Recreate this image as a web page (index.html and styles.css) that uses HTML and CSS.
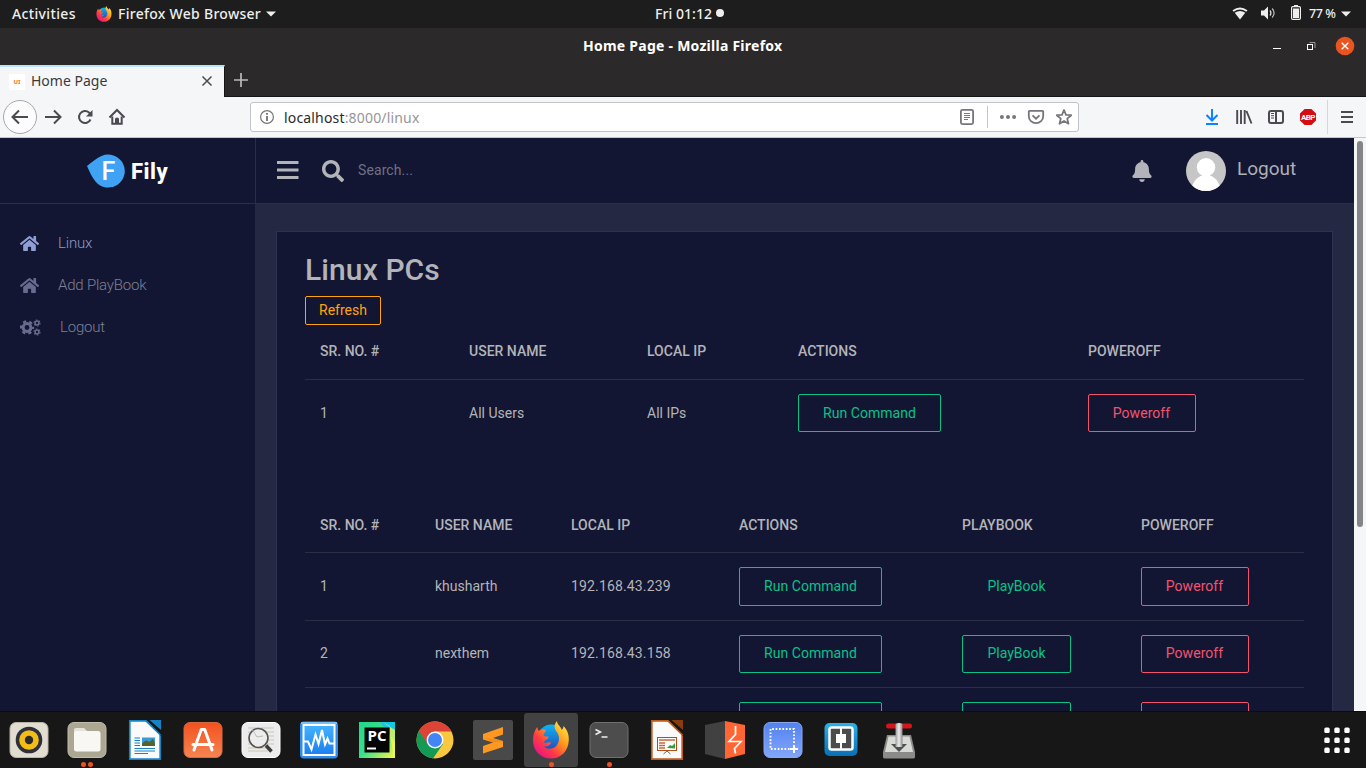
FILE: index.html
```html
<!DOCTYPE html>
<html lang="en">
<head>
<meta charset="utf-8">
<title>Home Page</title>
<link rel="stylesheet" href="styles.css">
</head>
<body>
<svg class="defs" width="0" height="0">
  <defs>
    <linearGradient id="ffx" x1="0.9" y1="0" x2="0.1" y2="0.9"><stop offset="0" stop-color="#fff14a"/><stop offset=".4" stop-color="#ff9a1c"/><stop offset=".7" stop-color="#ff3a45"/><stop offset="1" stop-color="#e6138a"/></linearGradient>
    <linearGradient id="globe" x1="0" y1="0" x2="0" y2="1"><stop offset="0" stop-color="#0bb5f5"/><stop offset="1" stop-color="#2a3fae"/></linearGradient>
    <linearGradient id="vital" x1="0" y1="0" x2="0" y2="1"><stop offset="0" stop-color="#43b4ff"/><stop offset="1" stop-color="#1b7ff0"/></linearGradient>
    <linearGradient id="soft" x1="0" y1="0" x2="0" y2="1"><stop offset="0" stop-color="#f4511e"/><stop offset="1" stop-color="#f58552"/></linearGradient>
    <linearGradient id="shot" x1="0" y1="0" x2="0" y2="1"><stop offset="0" stop-color="#5182f0"/><stop offset="1" stop-color="#84a6fb"/></linearGradient>
    <linearGradient id="brk" x1="0" y1="0" x2="0" y2="1"><stop offset="0" stop-color="#2bb1e8"/><stop offset="1" stop-color="#0a6fb5"/></linearGradient>
    <linearGradient id="pcg" x1="0" y1="0" x2="1" y2="1"><stop offset="0" stop-color="#21d789"/><stop offset=".5" stop-color="#3be08a"/><stop offset="1" stop-color="#fcf84a"/></linearGradient>
    <linearGradient id="metal" x1="0" y1="0" x2="1" y2="0"><stop offset="0" stop-color="#999"/><stop offset=".5" stop-color="#eee"/><stop offset="1" stop-color="#888"/></linearGradient>
    <symbol id="firefox" viewBox="0 0 36 38">
      <circle cx="18.500" cy="18" r="14.500" fill="url(#globe)"/>
      <path d="M24 0c0 4 4 5 4.500 9 1.500-1 2-2.500 2-4 4 4 5.500 9 5.300 14C35.500 30 28 37.500 18 37.500S0 30 0 19.500C0 13 2 9 4.200 6c.2 2 .8 3 1.800 4 2-2 5-2 7-1 0 2-2.500 3-2.500 5 0 1 2 1.500 5 1.500 0 2-1 2.500-3 3.500-1 .5-1.500 2-1 3 2 0 4-1.500 6.500-.5-1 3-4 4.500-7 4 3 3.500 10 3 13-1.500 3.500-5 2-11-1-14-2-3-2-7 1-10z" fill="url(#ffx)"/>
    </symbol>
    <symbol id="home" viewBox="0 0 576 512"><path d="M280.370 148.260L96 300.110V464a16 16 0 0 0 16 16l112.060-.29a16 16 0 0 0 15.920-16V368a16 16 0 0 1 16-16h64a16 16 0 0 1 16 16v95.640a16 16 0 0 0 16 16.050L464 480a16 16 0 0 0 16-16V300L295.670 148.260a12.190 12.190 0 0 0-15.300 0zM571.600 251.470L488 182.560V44.050a12 12 0 0 0-12-12h-56a12 12 0 0 0-12 12v72.610L318.470 43a48 48 0 0 0-61 0L4.340 251.470a12 12 0 0 0-1.600 16.900l25.500 31A12 12 0 0 0 45.150 301l235.220-193.740a12.190 12.190 0 0 1 15.300 0L530.900 301a12 12 0 0 0 16.900-1.600l25.500-31a12 12 0 0 0-1.700-16.930z"/></symbol>
  </defs>
</svg>

<div class="desktop">
  <header class="topbar">
    <div class="topbar-left">
      <span class="activities">Activities</span>
      <svg class="app-ico" width="16" height="16"><use href="#firefox"/></svg>
      <span class="app-name">Firefox Web Browser</span>
      <svg class="caret" width="10" height="6"><path d="M0 .5h10L5 5.500z" fill="#eee"/></svg>
    </div>
    <div class="clock"><span>Fri 01:12</span><i class="dot"></i></div>
    <div class="topbar-right">
      <svg class="tray" width="28" height="28"><path d="M6.500 10.200Q14 4.800 21.500 10.200L20.300 11.700Q14 7.300 7.700 11.700z" fill="#eee"/><path d="M8.700 12.700Q14 9.300 19.300 12.700L14 19.500z" fill="#eee"/></svg>
      <svg class="tray" width="28" height="28"><path d="M7 10.500h3l4-4v13l-4-4H7z" fill="#eee"/><path d="M16 10.500q1.800 2.500 0 5" fill="none" stroke="#ddd" stroke-width="1.300"/><path d="M18.200 8.500q3.800 4.500 0 9" fill="none" stroke="#bbb" stroke-width="1.200"/></svg>
      <svg class="tray" width="28" height="28"><rect x="9.600" y="6.600" width="8.800" height="12.800" rx="1.200" fill="none" stroke="#eee" stroke-width="1.200"/><path d="M12 5h4v1.500h-4zM11 8.500h6v9.500h-6z" fill="#eee"/></svg>
      <span class="battery">77 %</span>
      <svg class="caret2" width="10" height="6"><path d="M0 .5h10L5 5.500z" fill="#eee"/></svg>
    </div>
  </header>

  <div class="titlebar">
    <span class="win-title">Home Page - Mozilla Firefox</span>
    <div class="win-controls">
      <svg width="100" height="36"><path d="M17 20.500h8" stroke="#fff"/><path d="M53.500 14.500h5.500v5.500" fill="none" stroke="#999"/><rect x="51.500" y="16.500" width="5" height="5" fill="none" stroke="#fff"/><circle cx="89" cy="18" r="9.300" fill="#e95420"/><path d="M85.700 14.700l6.600 6.600M92.300 14.700l-6.600 6.600" stroke="#fff" stroke-width="1.400"/></svg>
    </div>
  </div>

  <div class="tabs">
    <div class="tab">
      <span class="favicon">UI</span>
      <span class="tab-title">Home Page</span>
      <svg class="tab-close" width="12" height="12"><path d="M1.500 1.500l9 9M10.500 1.500l-9 9" stroke="#4a4a4f" stroke-width="1.500"/></svg>
    </div>
    <svg class="newtab" width="32" height="31"><path d="M16 8v14M9 15h14" stroke="#bbb" stroke-width="1.700"/></svg>
  </div>

  <div class="toolbar">
    <svg width="37" height="40"><circle cx="20" cy="20" r="16.500" fill="#fcfcfd" stroke="#a8a8aa"/><path d="M28 20H13M19 13.500L12.500 20l6.500 6.500" class="tb"/></svg>
    <svg width="32" height="40"><path d="M8 20h15M17 13.500l6.500 6.500-6.500 6.500" class="tb"/></svg>
    <svg width="32" height="40"><path d="M21.500 22.500a6 6 0 1 1-1.500-7l2.200 2.300" class="tb"/><path d="M23.500 13v6.500H17z" fill="#4a4a4f"/></svg>
    <svg width="32" height="40"><path d="M8.500 20.500L16 13l7.500 7.500" class="tb"/><path d="M11.300 19.500v7.200h9.400v-7.200" class="tb"/><path d="M14 27v-5q0-1.500 2-1.500t2 1.500v5z" fill="#4a4a4f"/></svg>
    <div class="urlbar">
      <svg width="33" height="28"><circle cx="16" cy="14" r="6.400" fill="none" stroke="#777" stroke-width="1.200"/><path d="M16 10v1.700M16 13v5" stroke="#666" stroke-width="1.700"/></svg>
      <span class="url">localhost<span class="path">:8000/linux</span></span>
      <svg class="push" width="28" height="28"><rect x="7.900" y="6.900" width="12.200" height="14.200" rx="1.500" class="ub"/><path d="M11 10.500h6M11 12.500h6M11 14.500h6M11 16.500h4" stroke="#777"/></svg>
      <i class="sep"></i>
      <svg width="28" height="28"><g fill="#76767a"><circle cx="7.900" cy="14" r="2"/><circle cx="14" cy="14" r="2"/><circle cx="20.100" cy="14" r="2"/></g></svg>
      <svg width="28" height="28"><path d="M7.500 7.800h13q.7 0 .7.800v4.600a7.200 7 0 0 1-14.400 0V8.600q0-.8.700-.8z" class="ub"/><path d="M10.500 12.300l3.500 3.400 3.500-3.400" class="ub"/></svg>
      <svg width="28" height="28"><path d="M14 7l2 4.800 5.200.4-4 3.400 1.300 5.100L14 17.900l-4.500 2.800 1.300-5.100-4-3.400 5.200-.4z" class="ub" stroke-linejoin="round"/></svg>
    </div>
    <svg class="dl" width="32" height="40"><path d="M16 12v11M10.500 18l5.500 5.500 5.500-5.500M10 27h12" fill="none" stroke="#0a84ff" stroke-width="2"/></svg>
    <svg width="32" height="40"><path d="M9.200 13v14M13 13v14M16.700 13v14M18.500 14l5 12.500" stroke="#4a4a4f" stroke-width="1.900"/></svg>
    <svg width="32" height="40"><rect x="9" y="14" width="14" height="12" rx="2" class="tb"/><path d="M16 14v12" class="tb"/><path d="M11 16.500h3M11 18.700h3M11 21h3" stroke="#4a4a4f"/></svg>
    <svg width="32" height="40"><path d="M12.600 12h6.800l4.600 4.600v6.800L19.400 28h-6.800L8 23.400v-6.800z" fill="#d40d12"/><text x="16" y="23" text-anchor="middle" class="abp">ABP</text></svg>
    <i class="tsep"></i>
    <svg width="38" height="40"><path d="M13 15h12M13 20h12M13 25h12" stroke="#4a4a4f" stroke-width="2"/></svg>
  </div>

  <div class="viewport">
    <aside class="sidebar">
      <div class="brand">
        <svg width="40" height="36" viewBox="0 0 40 36"><path d="M1 13C6 9 11 5 15.500 3A16.500 16.500 0 1 1 9.500 28.500C5.500 23.500 3.500 18.500 1 13z" fill="#3fa2f5"/><text x="22.500" y="27.200" text-anchor="middle" class="brand-f">F</text></svg>
        <span class="brand-name">Fily</span>
      </div>
      <nav class="menu">
        <a class="menu-item active"><svg width="19" height="17"><use href="#home"/></svg><span>Linux</span></a>
        <a class="menu-item"><svg width="19" height="17"><use href="#home"/></svg><span>Add PlayBook</span></a>
        <a class="menu-item wide"><svg width="21" height="17" viewBox="0 0 21 17"><circle cx="7" cy="8.500" r="3.900" fill="none" stroke="#676b8e" stroke-width="3"/><circle cx="7" cy="8.500" r="6.100" fill="none" stroke="#676b8e" stroke-width="2.200" stroke-dasharray="3.200 3.188" stroke-dashoffset="1.600"/><g fill="none" stroke="#676b8e"><circle cx="17" cy="4" r="1.900" stroke-width="1.500"/><circle cx="17" cy="4" r="3" stroke-width="1.200" stroke-dasharray="1.600 1.540"/><circle cx="17" cy="13" r="1.900" stroke-width="1.500"/><circle cx="17" cy="13" r="3" stroke-width="1.200" stroke-dasharray="1.600 1.540"/></g></svg><span>Logout</span></a>
      </nav>
    </aside>

    <div class="page">
      <div class="page-head">
        <svg class="bars" width="22" height="20"><path d="M0 1h21.500v3H0zM0 8.500h21.500v3H0zM0 16h21.500v3H0z" fill="#b3b4b9"/></svg>
        <svg class="search" width="22" height="22" viewBox="0 0 512 512"><path fill="#b3b4b9" d="M505 442.700L405.300 343c-4.500-4.500-10.600-7-17-7H372c27.600-35.300 44-79.700 44-128C416 93.100 322.900 0 208 0S0 93.100 0 208s93.100 208 208 208c48.300 0 92.700-16.400 128-44v16.300c0 6.400 2.500 12.500 7 17l99.700 99.700c9.400 9.400 24.600 9.400 33.900 0l28.300-28.300c9.400-9.400 9.400-24.600.1-34zM208 336c-70.700 0-128-57.200-128-128 0-70.700 57.200-128 128-128 70.700 0 128 57.200 128 128 0 70.700-57.200 128-128 128z"/></svg>
        <span class="placeholder">Search...</span>
        <svg class="bell" width="20" height="22" viewBox="0 0 448 512"><path fill="#b3b4b9" d="M224 512c35.320 0 63.970-28.650 63.970-64H160.030c0 35.350 28.650 64 63.970 64zm215.390-149.710c-19.320-20.760-55.470-51.990-55.470-154.290 0-77.700-54.480-139.900-127.940-155.160V32c0-17.670-14.320-32-31.980-32s-31.980 14.330-31.980 32v20.840C118.560 68.100 64.080 130.300 64.080 208c0 102.300-36.150 133.530-55.470 154.290-6 6.450-8.660 14.160-8.610 21.710.11 16.400 12.980 32 32.100 32h383.800c19.120 0 32-15.600 32.100-32 .05-7.550-2.610-15.270-8.610-21.710z"/></svg>
        <svg class="avatar" width="40" height="40"><clipPath id="av"><circle cx="20" cy="20" r="20"/></clipPath><g clip-path="url(#av)"><path d="M0 0h40v40H0z" fill="#c6c6c6"/><circle cx="20" cy="16.200" r="9.200" fill="#fff"/><ellipse cx="20" cy="38.500" rx="14" ry="14.500" fill="#fff"/></g></svg>
        <span class="logout">Logout</span>
      </div>

      <main class="card">
        <h1>Linux PCs</h1>
        <button class="btn btn-sm warn">Refresh</button>
        <table class="grid all">
          <colgroup><col class="a1"><col class="a2"><col class="a3"><col class="a4"><col></colgroup>
          <thead><tr><th>SR. NO. #</th><th>USER NAME</th><th>LOCAL IP</th><th>ACTIONS</th><th>POWEROFF</th></tr></thead>
          <tbody><tr class="last"><td>1</td><td>All Users</td><td>All IPs</td><td><button class="btn ok run">Run Command</button></td><td><button class="btn bad">Poweroff</button></td></tr></tbody>
        </table>
        <table class="grid pcs">
          <colgroup><col class="b1"><col class="b2"><col class="b3"><col class="b4"><col class="b5"><col></colgroup>
          <thead><tr><th>SR. NO. #</th><th>USER NAME</th><th>LOCAL IP</th><th>ACTIONS</th><th>PLAYBOOK</th><th>POWEROFF</th></tr></thead>
          <tbody>
            <tr class="tall"><td>1</td><td>khusharth</td><td class="ip">192.168.43.239</td><td><button class="btn ok run">Run Command</button></td><td><button class="btn ok play bare">PlayBook</button></td><td><button class="btn bad">Poweroff</button></td></tr>
            <tr><td>2</td><td>nexthem</td><td class="ip">192.168.43.158</td><td><button class="btn ok run">Run Command</button></td><td><button class="btn ok play">PlayBook</button></td><td><button class="btn bad">Poweroff</button></td></tr>
            <tr><td></td><td></td><td></td><td><button class="btn ok run"></button></td><td><button class="btn ok play"></button></td><td><button class="btn bad"></button></td></tr>
          </tbody>
        </table>
      </main>
    </div>
    <div class="scroll"><i class="thumb"></i></div>
  </div>

  <footer class="dock">
    <div class="slot"><svg width="40" height="40"><rect x="1" y="2.500" width="38" height="35" rx="6" fill="#e2ddd1" stroke="#b9b4a8"/><circle cx="20" cy="20" r="13.300" fill="#2d2f3a"/><circle cx="20" cy="20" r="9.800" fill="#f3bd18"/><circle cx="20" cy="20" r="4.200" fill="#2b2b2b"/></svg></div>
    <div class="slot"><svg width="40" height="40"><rect x="1" y="2.500" width="38" height="35" rx="6" fill="#aca792" stroke="#c2bdab"/><path d="M7 10q0-2 2-2h8l3 3v8H7z" fill="#e6e3da"/><rect x="7" y="11" width="26.500" height="20.500" rx="2.500" fill="#f8f7f4"/></svg><i class="run2"></i></div>
    <div class="slot"><svg width="40" height="40"><path d="M4.800.8h19L35.200 14v25.200H4.800z" fill="#fafafa"/><path d="M4.800.8h19L35.200 14v25.200H4.800z" fill="none" stroke="#1584c7" stroke-width="1.700"/><path d="M21 0h5l10 11v5z" fill="#171717"/><path d="M20.500.5L35.500 15" stroke="#1584c7" stroke-width="1.700"/><path d="M24.500 0H36v10z" fill="#1584c7"/><g stroke="#1683c4" stroke-width="1.200"><path d="M9.500 18H15M9.500 20.500H15M9.500 23H15M9.500 25.500h5.500M9.500 28.500H30M9.500 31H30M9.500 33.500H23"/></g><path d="M17 17.500h13V26H17z" fill="#3a9ad8"/><path d="M17 24q3-5 5.500-3t4-1 3.500 4v2H17z" fill="#53642d"/></svg></div>
    <div class="slot"><svg width="40" height="40"><rect x="1" y="2.500" width="38" height="35" rx="6" fill="url(#soft)" stroke="#d86a40"/><path d="M12 27L18.300 9.500h3.400L28 27M10 24.500h20M11 30l1-3M29 30l-1-3" fill="none" stroke="#fff" stroke-width="3" stroke-linecap="round" stroke-linejoin="round"/></svg></div>
    <div class="slot"><svg width="40" height="40"><rect x="1" y="2.500" width="38" height="35" rx="6" fill="#ececec" stroke="#fff"/><path d="M7 8h26M7 12h26M7 16h26M7 20h26M7 24h26M7 28h20M7 31h20" stroke="#c9c5b7"/><circle cx="17.500" cy="18" r="9.500" fill="#eeeeee" fill-opacity=".85" stroke="#555" stroke-width="1.700"/><path d="M11 9l5 8 6-1" fill="none" stroke="#bbb"/><path d="M25 25.500l5.500 6" stroke="#3c3c3c" stroke-width="3.500"/></svg></div>
    <div class="slot"><svg width="40" height="40"><rect x="1" y="1.500" width="38" height="37" rx="4" fill="#2f8df0"/><path d="M2 3h36" stroke="#8bd4ff" stroke-width="1.500"/><rect x="4.500" y="5" width="31" height="30" fill="url(#vital)" stroke="#fff" stroke-width="2"/><path d="M5 21.500h4l3.500 8 4-15 3 9.500 3.500-14 3 14.500 2.500-6 2 5h5" fill="none" stroke="#fff" stroke-width="2"/></svg></div>
    <div class="slot"><svg width="40" height="40"><path d="M2 2h36v36H2z" fill="url(#pcg)"/><path d="M23 2h15v20L27 7z" fill="#13c8e2"/><path d="M25 2l8 4v10l4 21 1-1V10z" fill="#fcf84a" fill-opacity=".75"/><path d="M7.500 7.500h25v25h-25z" fill="#050505"/><text x="20" y="20.500" text-anchor="middle" class="pc">PC</text><path d="M10 27.500h9v2h-9z" fill="#fff"/></svg></div>
    <div class="slot"><svg width="40" height="40"><circle cx="20" cy="20" r="18.500" fill="#f8c93e"/><path d="M20 20L4 10.700A18.500 18.500 0 0 0 18 38.400L28 24z" fill="#139b56"/><path d="M20 11.500h16.400A18.500 18.500 0 0 0 4 10.700L12.500 24z" fill="#db4437"/><circle cx="20" cy="20" r="8.400" fill="#fff"/><circle cx="20" cy="20" r="7" fill="#4285f4"/></svg></div>
    <div class="slot"><svg width="40" height="40"><rect width="40" height="40" rx="2" fill="#494949"/><path d="M10 14l20-7v7.500l-10 3.500 10 3v6l-20 6.500v-7.500l10-3.500-10-3z" fill="#ff9820"/><path d="M12 18l18 3-10 1.500z" fill="#d97512" fill-opacity=".4"/></svg></div>
    <div class="slot current"><svg width="36" height="38"><use href="#firefox"/></svg><i class="run1"></i></div>
    <div class="slot"><svg width="40" height="40"><rect x="1" y="2.500" width="38" height="35" rx="6" fill="#4d4d4d" stroke="#707070"/><path d="M6.500 9.500l5 2.500-5 2.500M12.500 17h6" fill="none" stroke="#eee" stroke-width="1.500"/></svg><i class="run1"></i></div>
    <div class="slot"><svg width="40" height="40"><path d="M4.800.8h19L35.200 14v25.200H4.800z" fill="#fafafa" stroke="#bf5a1c" stroke-width="1.700"/><path d="M21 0h5l10 11v5z" fill="#171717"/><path d="M20.500.5L35.500 15" stroke="#bf5a1c" stroke-width="1.700"/><path d="M24.500 0H36v10z" fill="#8a3d0c"/><rect x="10.500" y="17.500" width="19" height="13" fill="#fff" stroke="#b44b1b"/><path d="M12 20h16M12 23h6M12 25.500h6M12 28h6" stroke="#c8683a" stroke-width="1.300"/><path d="M20 28l3-3 2 1 3-3v5.500z" fill="#34a037"/><path d="M16.500 34l3.500-3 3.500 3" fill="none" stroke="#666"/></svg></div>
    <div class="slot"><svg width="40" height="40"><path d="M0 5l20-4v38L0 34z" fill="#414141"/><path d="M20 1l20 4v29l-20 5z" fill="#ff6633"/><path d="M30.500 6v8.500L24 21.500h12L29.500 28.500l1 5" fill="none" stroke="#fff" stroke-width="1.700"/></svg></div>
    <div class="slot"><svg width="40" height="40"><rect x="1" y="2.500" width="38" height="35" rx="6" fill="url(#shot)" stroke="#8ca7ef"/><path d="M30 29H7.500V9h23.500v15" fill="none" stroke="#fff" stroke-width="1.900" stroke-dasharray="1.700 1.700"/><path d="M31 25v8M27 29h8" stroke="#fff" stroke-width="2"/></svg></div>
    <div class="slot"><svg width="40" height="40"><rect x="3.500" y="3" width="33" height="33" rx="5" fill="url(#brk)"/><rect x="8.500" y="7.500" width="23" height="22" rx="2" fill="#4c4c4c" stroke="#fff" stroke-width="2.500"/><path d="M20 8v21" stroke="#fff" stroke-width="2"/><rect x="15" y="14" width="10" height="9" fill="#fff"/></svg></div>
    <div class="slot"><svg width="40" height="40"><path d="M8 15h24l4 17v5q0 1.500-2 1.500H6q-2 0-2-1.500v-5z" fill="#8b8c89"/><path d="M9.500 16.500h21L34 32H6z" fill="#d8dbd5"/><path d="M12 24h16l-8 8z" fill="#4b5153"/><rect x="7" y="3.500" width="26" height="5" rx="2.500" fill="#d4151c"/><path d="M16.500 4q3.500-2 7 0v23h-7z" fill="url(#metal)"/></svg></div>
    <svg class="apps" width="58" height="56"><g fill="#fff"><rect x="16.300" y="15.500" width="5.400" height="5.400" rx="1.500"/><rect x="26.300" y="15.500" width="5.400" height="5.400" rx="1.500"/><rect x="36.300" y="15.500" width="5.400" height="5.400" rx="1.500"/><rect x="16.300" y="25.500" width="5.400" height="5.400" rx="1.500"/><rect x="26.300" y="25.500" width="5.400" height="5.400" rx="1.500"/><rect x="36.300" y="25.500" width="5.400" height="5.400" rx="1.500"/><rect x="16.300" y="35.500" width="5.400" height="5.400" rx="1.500"/><rect x="26.300" y="35.500" width="5.400" height="5.400" rx="1.500"/><rect x="36.300" y="35.500" width="5.400" height="5.400" rx="1.500"/></g></svg>
  </footer>
</div>
</body>
</html>
```
FILE: styles.css
```css
* { box-sizing: border-box; }
body { margin: 0; background: #131632; font-family: Roboto, "Liberation Sans", sans-serif; }
svg { display: block; flex: none; }
.defs { position: absolute; }
.desktop { width: 1366px; height: 768px; display: flex; flex-direction: column; overflow: hidden; }
.topbar, .titlebar, .tabs, .toolbar { font-family: "Noto Sans", "Open Sans", sans-serif; flex: none; white-space: nowrap; }

/* system bar */
.topbar { height: 28px; background: #1d1d1d; color: #eee; font-size: 14px; font-weight: 500; display: grid; grid-template-columns: 655px 1fr 140px; line-height: 27px; }
.topbar-left, .clock, .topbar-right { display: flex; align-items: center; height: 27px; }
.activities { margin-left: 12px; width: 84px; letter-spacing: .35px; }
.app-ico { margin-right: 6px; }
.app-name { width: 148px; letter-spacing: .28px; }
.dot { width: 8px; height: 8px; border-radius: 50%; background: #eee; margin-left: 4px; }
.clock { padding-bottom: 1px; }
.clock span { width: 57px; letter-spacing: .05px; }
.battery { font-size: 12.5px; width: 32px; margin-left: -1px; letter-spacing: -.4px; }

/* window frame */
.titlebar { height: 37px; background: #2c292a; color: #fff; display: grid; grid-template-columns: 1fr 110px; }
.win-title { font-size: 14px; font-weight: 700; line-height: 36px; padding-left: 583px; letter-spacing: .25px; }
.tabs { height: 32px; background: #2c292a; border-bottom: 1px solid #151515; display: flex; }
.tab { width: 225px; height: 32px; background: #f5f6f7; border-top: 2px solid #b8e3f9; border-right: 1px solid #151515; display: flex; align-items: center; color: #3a3a3e; font-size: 14px; padding-left: 9px; }
.tab-title { padding-bottom: 3px; }
.favicon { width: 16px; height: 16px; background: #fff; color: #ef7b35; font-size: 6px; font-weight: 800; line-height: 16px; text-align: center; margin-right: 6px; }
.tab-close { margin-left: auto; margin-right: 11px; margin-bottom: 2px; }
.toolbar { height: 41px; background: #f5f6f7; border-bottom: 1px solid #c5c7cd; display: flex; align-items: center; }
.tb { fill: none; stroke: #4a4a4f; stroke-width: 2; }
.ub { fill: none; stroke: #76767a; stroke-width: 1.8; }
.urlbar { width: 829px; height: 30px; margin-left: 117px; background: #fff; border: 1px solid #c0c3ca; border-radius: 3px; display: flex; align-items: center; font-size: 14px; color: #2a2a2e; letter-spacing: .17px; }
.path { color: #96969a; }
.push { margin-left: auto; }
.sep { width: 1px; height: 22px; background: #c5c5c9; margin: 0 6px; }
.dl { margin-left: 117px; }
.tsep { width: 1px; height: 34px; background: #d5d6da; margin-left: 3px; }
.abp { font: 700 8px Roboto, sans-serif; fill: #fff; letter-spacing: -.6px; }

/* page */
.viewport { flex: none; height: 573px; display: grid; grid-template-columns: 255px 1099px 12px; overflow: hidden; background: #131632; }
.brand { height: 66px; border-bottom: 1px solid #2b2d42; display: flex; align-items: center; padding-left: 86px; }
.brand-f { font: 500 25px Roboto, sans-serif; fill: #fff; }
.brand-name { color: #fff; font-weight: 800; font-size: 22px; margin-left: 5px; padding-top: 1px; letter-spacing: .5px; }
.menu { padding-top: 18px; }
.menu-item { height: 42px; display: flex; align-items: center; padding-left: 20px; font-weight: 300; font-size: 15px; letter-spacing: -.2px; color: #7d8096; fill: #676b8e; }
.menu-item span { margin-left: 19px; line-height: 20px; }
.active { color: #8f9bc8; fill: #8f9fd6; }
.page { background: #242842; overflow: hidden; min-width: 0; }
.page-head { height: 66px; background: #131632; border-left: 1px solid #2b2d42; border-bottom: 1px solid #2b2d42; display: flex; align-items: center; padding-left: 21px; }
.bars { margin-bottom: 2px; }
.search { margin-left: 23px; }
.placeholder { margin-left: 14px; padding-bottom: 2px; font-size: 14px; color: #6f7184; letter-spacing: .1px; }
.bell { margin-left: auto; }
.avatar { margin-left: 34px; }
.logout { width: 117px; margin-left: 11px; padding-bottom: 4px; font-size: 19px; color: #adafb5; }
.card { margin: 27px 21px 0; height: 600px; border: 1px solid #2e3250; background: #131632; padding: 20px 28px; color: #b3b4b9; }
.card h1 { margin: 0 0 8px; font-size: 30px; font-weight: 500; line-height: 36px; letter-spacing: .1px; }
.btn { display: block; font: 400 14px/20px Roboto, sans-serif; background: none; border: 1px solid; border-radius: 2px; height: 38px; width: 108px; padding: 0; text-align: center; }
.btn-sm { width: 76px; height: 29px; padding-bottom: 2px; }
.warn { color: #ffa30f; }
.ok { color: #08c28a; }
.bad { color: #f3536f; padding-right: 1px; letter-spacing: .05px; }
.run { width: 143px; letter-spacing: .05px; }
.play { width: 109px; }
.bare { border-color: transparent; }
.grid { width: 999px; table-layout: fixed; border-spacing: 0; font-size: 14px; }
.grid th, .grid td { padding: 0 0 0 15px; text-align: left; border-bottom: 1px solid #2b2d42; vertical-align: middle; }
.grid th { height: 55px; font-weight: 500; padding-bottom: 2px; }
.grid td { height: 67px; }
.pcs th { padding-bottom: 0; }
.pcs td { padding-bottom: 2px; }
.pcs td:nth-child(n+4) { padding-bottom: 0; }
.pcs .btn { padding-bottom: 2px; }
.ip { letter-spacing: .15px; }
.grid .tall td { height: 68px; }
.tall .btn { height: 39px; }
.last td { border-color: transparent; }
.all { margin-bottom: 51px; }
.a1 { width: 149px; } .a2 { width: 178px; } .a3 { width: 151px; } .a4 { width: 290px; }
.b1 { width: 115px; } .b2 { width: 136px; } .b3 { width: 168px; } .b4 { width: 223px; } .b5 { width: 179px; }
.scroll { background: #f5f6f7; padding: 3px; }
.thumb { display: block; width: 6px; height: 386px; border-radius: 3px; background: #858587; }

/* dock */
.dock { flex: none; height: 57px; background: #171717; border-top: 1px solid #0c0c0c; display: flex; }
.slot { width: 58px; height: 56px; display: flex; align-items: center; justify-content: center; position: relative; }
.slot svg { margin-bottom: 1px; }
.current { background: #424242; border-radius: 3px; width: 54px; height: 54px; margin: 1px 2px; }
.run1, .run2 { position: absolute; bottom: 1px; left: 50%; width: 5px; height: 5px; margin-left: -2.5px; border-radius: 50%; background: #e95420; }
.current .run1 { bottom: 0; }
.run2 { margin-left: -6px; box-shadow: 7px 0 #e95420; }
.pc { font: 700 15px "Open Sans", "Noto Sans", sans-serif; fill: #fff; }
.apps { margin-left: 380px; }
```
